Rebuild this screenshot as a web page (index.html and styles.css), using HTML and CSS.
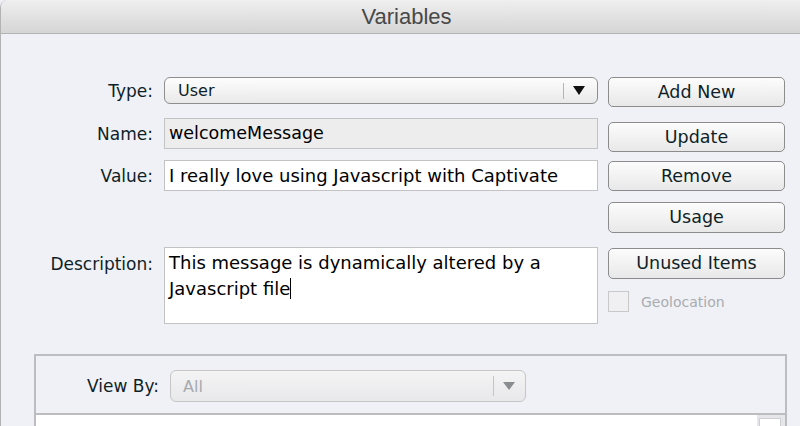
FILE: index.html
```html
<!DOCTYPE html>
<html>
<head>
<meta charset="utf-8">
<link rel="stylesheet" href="styles.css">
</head>
<body>
<div class="window">
  <div class="titlebar">Variables</div>
  <div class="content">
    <div class="top">
      <div class="form">
        <div class="row row-type">
          <label class="lbl">Type:</label>
          <div class="select">
            <span class="sel-text">User</span>
            <span class="sel-sep"></span>
            <span class="sel-arrow"></span>
          </div>
        </div>
        <div class="row row-name">
          <label class="lbl">Name:</label>
          <div class="field field-disabled">welcomeMessage</div>
        </div>
        <div class="row row-value">
          <label class="lbl">Value:</label>
          <div class="field">I really love using Javascript with Captivate</div>
        </div>
        <div class="row row-desc">
          <label class="lbl">Description:</label>
          <div class="field textarea">This message is dynamically altered by a Javascript file<span class="caret"></span></div>
        </div>
      </div>
      <div class="buttons">
        <div class="btn b-add">Add New</div>
        <div class="btn b-update">Update</div>
        <div class="btn b-remove">Remove</div>
        <div class="btn b-usage">Usage</div>
        <div class="btn b-unused">Unused Items</div>
        <div class="check">
          <span class="box"></span>
          <span class="check-label">Geolocation</span>
        </div>
      </div>
    </div>
    <div class="panel">
      <div class="panel-head">
        <label class="lbl lbl-view">View By:</label>
        <div class="select select-disabled">
          <span class="sel-text">All</span>
          <span class="sel-sep"></span>
          <span class="sel-arrow"></span>
        </div>
      </div>
      <div class="panel-list">
        <div class="list"></div>
        <div class="scroll"><div class="scroll-box"></div></div>
      </div>
    </div>
  </div>
</div>
</body>
</html>
```

FILE: styles.css
```css
html, body {
  margin: 0;
  padding: 0;
  background: #f0f1f6;
  overflow: hidden;
}

.window {
  width: 800px;
  height: 426px;
  background: #f0f1f6;
  border-left: 1px solid #b3b3b5;
  border-top-left-radius: 8px;
  box-sizing: border-box;
  overflow: hidden;
  font-family: "DejaVu Sans", Verdana, sans-serif;
  color: #0f1f28;
}

.titlebar {
  height: 34px;
  box-sizing: border-box;
  background: linear-gradient(#efefef, #d5d5d5);
  border-bottom: 1px solid #b2b2b2;
  text-align: center;
  font-family: "Liberation Sans", Arial, sans-serif;
  font-size: 22px;
  line-height: 34px;
  padding-left: 12px;
  color: #484848;
}

.content {
  padding-top: 43px;
}

.top {
  display: flex;
  align-items: flex-start;
}

.form {
  display: flex;
  flex-direction: column;
  width: 597px;
}

.row {
  display: flex;
  align-items: center;
}

.lbl {
  width: 152px;
  flex: none;
  text-align: right;
  font-size: 17px;
  margin-right: 11px;
  color: #0f1f28;
  white-space: nowrap;
}

.select {
  flex: none;
  width: 434px;
  height: 27px;
  box-sizing: border-box;
  border: 1px solid #8e8e8e;
  border-radius: 6px;
  background: linear-gradient(#fdfdfd, #e9e9e9);
  display: flex;
  align-items: center;
  font-size: 16px;
}

.sel-text {
  flex: 1;
  padding-left: 13px;
}

.sel-sep {
  width: 1px;
  height: 16px;
  background: #b5b5b5;
}

.sel-arrow {
  width: 0;
  height: 0;
  border-left: 6px solid transparent;
  border-right: 6px solid transparent;
  border-top: 9px solid #111;
  margin: 0 12px 0 9px;
}

.field {
  flex: none;
  width: 434px;
  height: 31px;
  box-sizing: border-box;
  border: 1px solid #c3c3c3;
  background: #fff;
  font-size: 18px;
  line-height: 29px;
  padding-left: 4px;
  white-space: nowrap;
  color: #000;
}

.field-disabled {
  background: #ededed;
  font-size: 17.5px;
}

.row-name { margin-top: 14px; }
.row-value { margin-top: 11px; }
.row-desc { margin-top: 56px; align-items: flex-start; }
.row-desc .lbl { padding-top: 7px; }

.textarea {
  height: 77px;
  white-space: normal;
  line-height: 26px;
  padding-top: 2px;
  padding-right: 20px;
}

.caret {
  display: inline-block;
  width: 1px;
  height: 21px;
  background: #000;
  vertical-align: -4px;
}

.buttons {
  margin-left: 10px;
  width: 177px;
  display: flex;
  flex-direction: column;
}

.btn {
  height: 30px;
  box-sizing: border-box;
  border: 1px solid #8c8c8c;
  border-radius: 5px;
  background: linear-gradient(#fcfcfc, #e8e8e8);
  text-align: center;
  font-size: 17.5px;
  line-height: 28px;
  color: #0f1f28;
}

.b-update { margin-top: 15px; }
.b-remove { margin-top: 9px; }
.b-usage { margin-top: 11px; height: 31px; }
.b-unused { margin-top: 15px; height: 31px; }

.check {
  margin-top: 12px;
  display: flex;
  align-items: center;
}

.box {
  width: 21px;
  height: 21px;
  box-sizing: border-box;
  border: 1px solid #c8c8c8;
  background: #f0f0f2;
}

.check-label {
  margin-left: 12px;
  font-size: 14px;
  color: #a8acb0;
}

.panel {
  margin-top: 30px;
  margin-left: 33px;
  width: 753px;
  height: 100px;
  box-sizing: border-box;
  border: 2px solid #bdbdbf;
  border-bottom: none;
}

.panel-head {
  height: 59px;
  box-sizing: border-box;
  display: flex;
  align-items: center;
  padding-top: 3px;
  border-bottom: 2px solid #bdbdbf;
}

.lbl-view {
  width: 123px;
  margin-right: 11px;
}

.select-disabled {
  width: 356px;
  height: 32px;
  border-color: #c6c6c6;
  background: linear-gradient(#f4f4f5, #e8e8ea);
  color: #a6aaae;
}

.select-disabled .sel-text {
  padding-left: 12px;
}

.select-disabled .sel-sep {
  height: 20px;
  background: #c4c4c4;
}

.select-disabled .sel-arrow {
  border-top-color: #8a8d90;
  border-top-width: 8px;
  margin: 0 10px 0 9px;
}

.panel-list {
  display: flex;
  height: 40px;
}

.list {
  flex: 1;
  background: #fff;
}

.scroll {
  width: 26px;
  background: #e5e6ea;
  padding-top: 3px;
  padding-left: 2px;
}

.scroll-box {
  width: 22px;
  height: 30px;
  background: #fff;
  border: 1px solid #cfcfcf;
  box-sizing: border-box;
}
```
